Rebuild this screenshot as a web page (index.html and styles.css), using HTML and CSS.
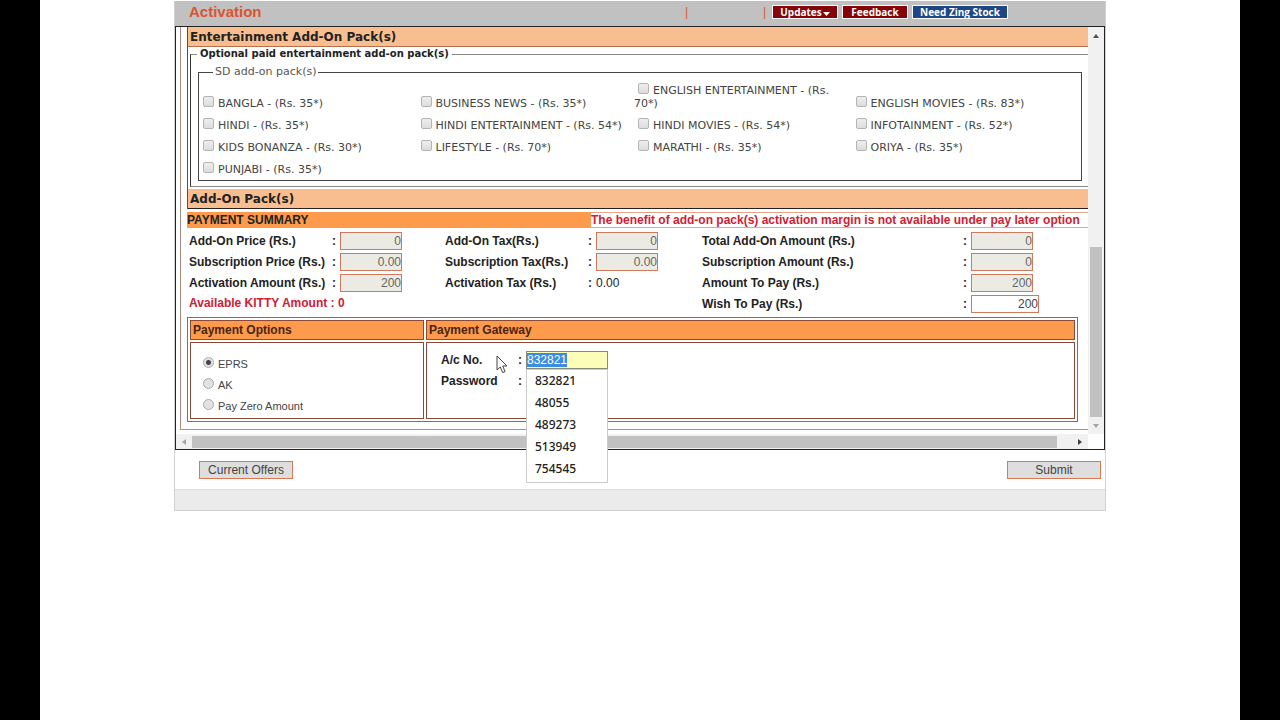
FILE: index.html
```html
<!DOCTYPE html>
<html lang="en">
<head>
<meta charset="utf-8">
<title>Activation</title>
<link rel="stylesheet" href="styles.css">
</head>
<body>
<main class="page">
  <div class="panel">
    <header class="topbar">
      <h1 class="title">Activation</h1>
      <nav class="links">
        <span class="sep sep-wide">|</span>
        <span class="sep">|</span>
        <button class="tag">Updates<svg class="caret" viewBox="0 0 7 4"><path d="M0 0h7L3.5 4z"/></svg></button>
        <button class="tag">Feedback</button>
        <button class="tag tag-blue">Need Zing Stock</button>
      </nav>
    </header>

    <div class="frame">
      <div class="viewport">
        <div class="content">
          <section class="packs">
            <h2 class="bar">Entertainment Add-On Pack(s)</h2>
            <fieldset class="outer-set">
              <legend>Optional paid entertainment add-on pack(s)</legend>
              <fieldset class="inner-set">
                <legend>SD add-on pack(s)</legend>
                <div class="pack-grid">
                  <label><input type="checkbox">BANGLA - (Rs. 35*)</label>
                  <label><input type="checkbox">BUSINESS NEWS - (Rs. 35*)</label>
                  <label><input type="checkbox">ENGLISH ENTERTAINMENT - (Rs. 70*)</label>
                  <label><input type="checkbox">ENGLISH MOVIES - (Rs. 83*)</label>
                  <label><input type="checkbox">HINDI - (Rs. 35*)</label>
                  <label><input type="checkbox">HINDI ENTERTAINMENT - (Rs. 54*)</label>
                  <label><input type="checkbox">HINDI MOVIES - (Rs. 54*)</label>
                  <label><input type="checkbox">INFOTAINMENT - (Rs. 52*)</label>
                  <label><input type="checkbox">KIDS BONANZA - (Rs. 30*)</label>
                  <label><input type="checkbox">LIFESTYLE - (Rs. 70*)</label>
                  <label><input type="checkbox">MARATHI - (Rs. 35*)</label>
                  <label><input type="checkbox">ORIYA - (Rs. 35*)</label>
                  <label><input type="checkbox">PUNJABI - (Rs. 35*)</label>
                </div>
              </fieldset>
            </fieldset>
            <h2 class="bar bar-dark">Add-On Pack(s)</h2>
          </section>

          <div class="summary-head">
            <h2 class="summary-title">PAYMENT SUMMARY</h2>
            <p class="notice">The benefit of add-on pack(s) activation margin is not available under pay later option</p>
          </div>

          <div class="summary">
            <div class="col">
              <div class="row"><label for="aop">Add-On Price (Rs.)</label><span>:</span><input id="aop" value="0" disabled></div>
              <div class="row"><label for="sp">Subscription Price (Rs.)</label><span>:</span><input id="sp" value="0.00" disabled></div>
              <div class="row"><label for="aa">Activation Amount (Rs.)</label><span>:</span><input id="aa" value="200" disabled></div>
              <p class="row kitty">Available KITTY Amount : 0</p>
            </div>
            <div class="col">
              <div class="row"><label for="aot">Add-On Tax(Rs.)</label><span>:</span><input id="aot" value="0" disabled></div>
              <div class="row"><label for="st">Subscription Tax(Rs.)</label><span>:</span><input id="st" value="0.00" disabled></div>
              <div class="row"><label for="at">Activation Tax (Rs.)</label><span>:</span><output id="at">0.00</output></div>
            </div>
            <div class="col col-total">
              <div class="row"><label for="ta">Total Add-On Amount (Rs.)</label><span>:</span><input id="ta" value="0" disabled></div>
              <div class="row"><label for="sa">Subscription Amount (Rs.)</label><span>:</span><input id="sa" value="0" disabled></div>
              <div class="row"><label for="ap">Amount To Pay (Rs.)</label><span>:</span><input id="ap" value="200" disabled></div>
              <div class="row"><label for="wp">Wish To Pay (Rs.)</label><span>:</span><input id="wp" class="open" value="200"></div>
            </div>
          </div>

          <div class="payment">
            <h3 class="cell cell-head">Payment Options</h3>
            <h3 class="cell cell-head">Payment Gateway</h3>
            <div class="cell options">
              <label><input type="radio" name="pay" checked>EPRS</label>
              <label><input type="radio" name="pay">AK</label>
              <label><input type="radio" name="pay">Pay Zero Amount</label>
            </div>
            <div class="cell gateway">
              <div class="row">
                <label for="acc">A/c No.</label><span>:</span>
                <div class="combo">
                  <input id="acc" class="account" value="832821" autocomplete="off">
                  <ul class="menu">
                    <li>832821</li>
                    <li>48055</li>
                    <li>489273</li>
                    <li>513949</li>
                    <li>754545</li>
                  </ul>
                </div>
                <svg class="pointer" viewBox="0 0 12 19"><path d="M1 1v14l3.3-3 2.4 5.600 2.4-1L6.700 11H11z" fill="#fff" stroke="#444"/></svg>
              </div>
              <div class="row"><label for="pwd">Password</label><span>:</span><input id="pwd" type="password"></div>
            </div>
          </div>
        </div>
      </div>
      <div class="vbar">
        <svg class="arrow" viewBox="0 0 6 4"><path d="M0 4h6L3 0z" fill="#505050"/></svg>
        <div class="vthumb"></div>
        <svg class="arrow" viewBox="0 0 6 4"><path d="M0 0h6L3 4z" fill="#a3a3a3"/></svg>
      </div>
      <div class="hbar">
        <svg class="arrow-side" viewBox="0 0 4 6"><path d="M4 0v6L0 3z" fill="#a3a3a3"/></svg>
        <div class="hthumb"></div>
        <svg class="arrow-side" viewBox="0 0 4 6"><path d="M0 0v6l4-3z" fill="#404040"/></svg>
      </div>
    </div>

    <div class="actions">
      <button class="action">Current Offers</button>
      <button class="action">Submit</button>
    </div>
    <footer class="foot"></footer>
  </div>
</main>
<script src="main.js"></script>
</body>
</html>
```
FILE: styles.css
```css
* { box-sizing: border-box; }

body {
  margin: 0;
  padding: 0 40px;
  background: #000;
  color: #222;
  font-family: "Liberation Sans", Arial, sans-serif;
  font-size: 12px;
  line-height: 14px;
}

h1, h2, h3, p, ul { margin: 0; padding: 0; }
input, button { font-family: inherit; margin: 0; }

.page {
  min-height: 100vh;
  padding: 1px 134px 0;
  background: #fff;
}

.panel {
  border: 1px solid #d0d0d0;
  border-top: 0;
}

/* top bar */
.topbar {
  display: flex;
  justify-content: space-between;
  height: 25px;
  padding: 0 97px 0 14px;
  background: #c1c1c1;
}
.title {
  font-size: 15px;
  line-height: 22px;
  color: #d9552f;
}
.links {
  display: flex;
  align-items: flex-start;
  gap: 4px;
  padding-top: 4px;
}
.sep { color: #d9552f; width: 4px; }
.sep-wide { margin-right: 70px; }
.tag {
  display: flex;
  align-items: center;
  justify-content: center;
  min-width: 66px;
  height: 14px;
  padding: 0;
  border: 1px solid #fff;
  background: #860408;
  color: #fff;
  font: bold 10px/12px "Open Sans", sans-serif;
}
.sep + .tag { margin-left: 1px; }
.tag-blue { background: #1f4788; min-width: 96px; }
.caret { width: 7px; height: 4px; fill: #fff; margin: 3px 0 0 1px; }

/* scrolling frame */
.frame {
  display: grid;
  grid-template-columns: minmax(0, 1fr) 16px;
  border: 1px solid #222;
}
.viewport {
  padding: 0 0 4px 4px;
}
.content {
  padding: 0 0 7px 6px;
  border-left: 1px solid #a98a80;
  border-bottom: 1px solid #b98a78;
}

/* add-on packs */
.packs {
  border-left: 1px solid #6b4a3c;
  font-family: "DejaVu Sans", Verdana, sans-serif;
}
.bar {
  height: 20px;
  padding-left: 2px;
  background: #f8be90;
  border-bottom: 1px solid #b5714f;
  font-size: 12px;
  line-height: 20px;
}
.bar-dark { border-bottom-color: #222; margin-top: 2px; }
fieldset { margin: 0; min-width: 0; }
.outer-set {
  margin-left: 2px;
  padding: 4px 6px 5px 7px;
  border: 1px solid #888;
  border-left-color: #333;
  border-right: 0;
}
.outer-set > legend {
  margin-left: -1px;
  padding: 0 3px;
  font-weight: bold;
  font-size: 10px;
}
.inner-set {
  padding: 4px 12px 1px 0;
  border: 1px solid #444;
  font-size: 11px;
}
.inner-set > legend {
  margin-left: 14px;
  padding: 0 2px;
  color: #555;
}
.pack-grid {
  display: grid;
  grid-template-columns: repeat(4, 1fr);
  row-gap: 8px;
  align-items: end;
  color: #444;
  line-height: 13px;
  padding-bottom: 3px;
}
.pack-grid input {
  appearance: none;
  width: 11px;
  height: 11px;
  margin: 0 4px;
  border: 1px solid #b4b4b4;
  border-radius: 2px;
  background: linear-gradient(#eee, #ddd);
  vertical-align: 0;
}

/* payment summary */
.summary-head {
  display: grid;
  grid-template-columns: 404px minmax(0, 1fr);
  height: 16px;
  margin-top: 3px;
  line-height: 16px;
}
.summary-title { background: #fd9a4b; font-size: 12px; line-height: 16px; }
.notice {
  overflow: hidden;
  white-space: nowrap;
  border: solid #e5a58c;
  border-width: 1px 0;
  color: #cf2033;
  font-weight: bold;
  line-height: 14px;
}
.summary {
  display: grid;
  grid-template-columns: 256px 257px minmax(0, 1fr);
  padding: 2px 10px 3px 2px;
}
.col { display: grid; grid-template-columns: 100%; grid-auto-rows: 21px; }
.row {
  display: grid;
  grid-template-columns: 143px 8px 1fr;
  align-items: center;
  font-weight: bold;
}
.col-total .row { grid-template-columns: 261px 8px 1fr; }
.row input {
  width: 62px;
  height: 18px;
  padding: 0;
  border: 1px solid #cf7a5c;
  background: #ebebe4;
  color: #666;
  font-size: 12px;
  text-align: right;
}
.row .open { width: 68px; background: #fff; color: #444; }
.row output { font-weight: normal; }
.kitty { display: block; line-height: 21px; color: #cf2033; }

/* payment options and gateway */
.payment {
  display: grid;
  grid-template-columns: 234px minmax(0, 1fr);
  gap: 2px;
  margin-right: 10px;
  padding: 2px;
  border: 1px solid #a8604a;
}
.cell { border: 1px solid #8a4a38; }
.cell-head {
  padding-left: 2px;
  background: #fd9a4b;
  color: #4a2412;
  font-size: 12px;
  line-height: 18px;
}
.options {
  display: grid;
  grid-auto-rows: 21px;
  padding: 11px 0 1px 12px;
  color: #444;
  font-size: 11px;
  line-height: 21px;
}
.options input {
  appearance: none;
  width: 11px;
  height: 11px;
  margin: 0 4px 0 0;
  border: 1px solid #aaa;
  border-radius: 50%;
  background: #e2e2e2;
}
.options input:checked { background: radial-gradient(circle, #444 0 2px, #e2e2e2 3px); }
.gateway {
  display: grid;
  grid-auto-rows: 21px;
  padding: 6px 0 0 14px;
}
.gateway .row { position: relative; grid-template-columns: 77px 8px 1fr; }
.gateway .row input { width: 82px; text-align: left; background: #fff; }
.combo { position: relative; z-index: 2; height: 18px; }
.gateway .row .account {
  display: block;
  background: #fbfdb8;
  border-color: #8a8a78;
  color: #222;
  outline: none;
}
.account::selection { background: #3b8de0; color: #fff; }
.menu {
  position: absolute;
  top: 18px;
  left: 0;
  width: 82px;
  padding: 0 0 2px 8px;
  list-style: none;
  background: #fff;
  border: 1px solid #ccc;
  font: 500 12px/22px "Noto Sans", sans-serif;
}
.pointer { position: absolute; left: 55px; top: 6px; width: 12px; height: 19px; }

/* scrollbars */
.vbar {
  display: grid;
  grid-template-rows: 220px 170px 1fr;
  justify-items: center;
  background: #f1f1f1;
}
.vthumb { width: 12px; background: #c1c1c1; }
.arrow { width: 6px; height: 4px; margin-top: 7px; }
.hbar {
  display: grid;
  grid-template-columns: 16px minmax(0, 1fr) 31px;
  align-items: center;
  justify-items: center;
  height: 15px;
  background: #f1f1f1;
}
.hthumb { justify-self: stretch; height: 12px; background: #c1c1c1; }
.arrow-side { width: 4px; height: 6px; }
.hbar .arrow-side:last-child { margin-left: 14px; }

/* bottom */
.actions {
  display: flex;
  justify-content: space-between;
  padding: 11px 4px 10px 24px;
}
.action {
  width: 94px;
  height: 18px;
  padding: 0;
  border: 1px solid #dc7653;
  background: #dedede;
  color: #444;
  font-size: 12px;
  line-height: 16px;
}
.foot {
  height: 21px;
  background: #ebebeb;
  border-top: 1px solid #ddd;
}
```
FILE: main.js
```js
var account = document.getElementById("acc");
account.focus();
account.select();
```
